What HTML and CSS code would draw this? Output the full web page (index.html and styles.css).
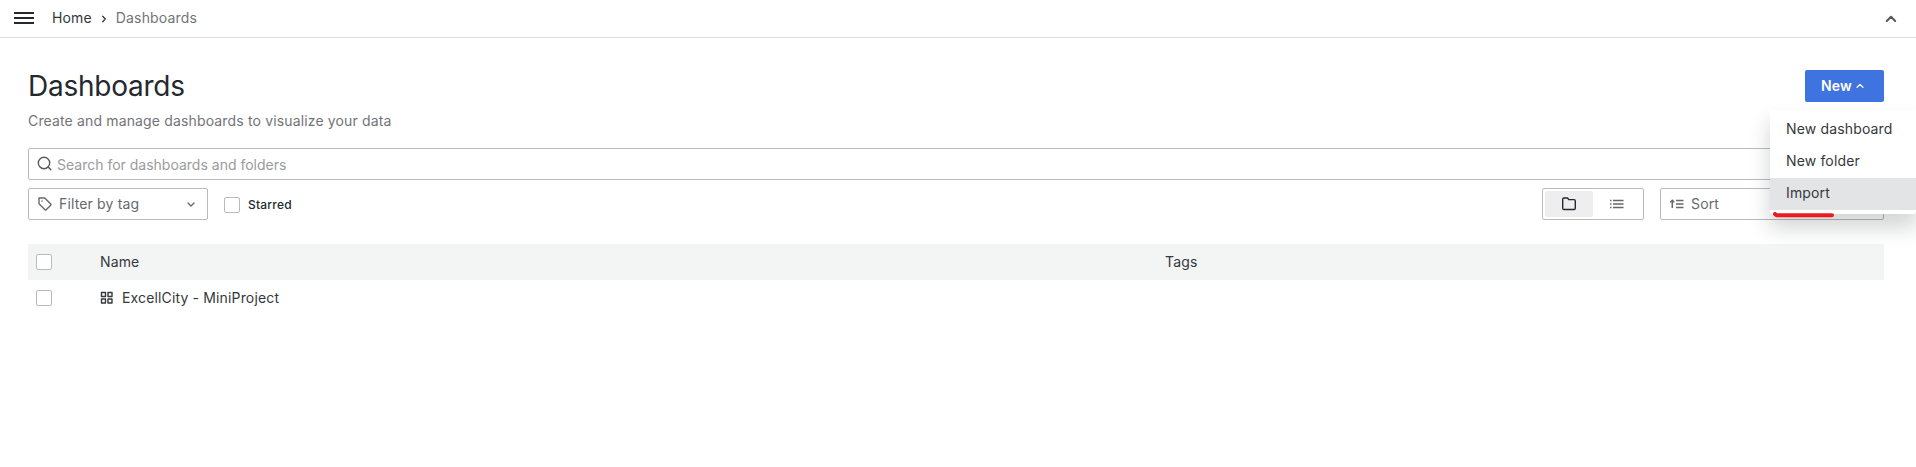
FILE: index.html
```html
<!DOCTYPE html>
<html lang="en">
<head>
<meta charset="utf-8">
<title>Dashboards</title>
<link rel="stylesheet" href="styles.css">
</head>
<body>
<header class="topbar">
  <svg class="burger" width="20" height="12" viewBox="0 0 20 12"><path d="M0 1h20M0 6h20M0 11h20"/></svg>
  <nav class="crumbs">
    <a class="home">Home</a>
    <svg class="line" width="16" height="16" viewBox="0 0 16 16"><path d="M6.700 5.300 9.300 8l-2.600 2.700"/></svg>
    <span class="current">Dashboards</span>
  </nav>
  <svg class="collapse line" width="18" height="18" viewBox="0 0 18 18"><path d="m4.800 11 4.200-4.200 4.200 4.200"/></svg>
</header>
<main class="page">
  <div class="heading">
    <h1>Dashboards</h1>
    <div class="new-wrap">
      <button class="new">New<svg class="line" width="14" height="14" viewBox="0 0 14 14"><path d="m4.100 8.200 2.900-2.800 2.900 2.800"/></svg></button>
      <div class="menu">
        <div class="item">New dashboard</div>
        <div class="item">New folder</div>
        <div class="item active">Import</div>
        <svg class="mark" width="62" height="6" viewBox="0 0 62 6"><path d="M3 2 4.500 3.300h55.500"/></svg>
      </div>
    </div>
  </div>
  <p class="subtitle">Create and manage dashboards to visualize your data</p>
  <div class="field search">
    <svg class="line" width="16" height="16" viewBox="0 0 16 16"><circle cx="7" cy="7" r="5.700"/><path d="m11.100 11.100 2.700 2.700"/></svg>
    <span>Search for dashboards and folders</span>
  </div>
  <div class="filters">
    <div class="field tag">
      <svg class="line" width="16" height="16" viewBox="0 0 16 16"><path d="M2 2h5.700l6 6q.6.6 0 1.200L9.200 13.700q-.6.6-1.200 0L2 7.700Z"/><path d="M5 5h.1"/></svg>
      <span>Filter by tag</span>
      <svg class="line arrow" width="16" height="16" viewBox="0 0 16 16"><path d="m5 7 3 2.900L11 7"/></svg>
    </div>
    <label class="starred"><span class="box"></span><span class="starred-text">Starred</span></label>
    <div class="views">
      <div class="view selected"><svg class="line" width="16" height="16" viewBox="0 0 16 16"><path d="M3 2h3.300q.7 0 .9.700l.3.900h5.500q1.300 0 1.300 1.300v7.300q0 1.300-1.300 1.300H3q-1.300 0-1.300-1.300V3.300Q1.700 2 3 2Z"/></svg></div>
      <div class="view"><svg class="list" width="16" height="16" viewBox="0 0 16 16"><path d="M1 4.500h1.500M4 4.500h10.500M1 8h1.500M4 8h10.500M1 11.500h1.500M4 11.500h10.500"/></svg></div>
    </div>
    <div class="field sort">
      <svg class="list" width="16" height="16" viewBox="0 0 16 16"><path d="M7 4.500h7.500M7 8h7.500M7 11.500h7.500M3.300 12V4.500M1.300 6.200l2-2 2 2"/></svg>
      <span>Sort</span>
    </div>
  </div>
  <div class="table">
    <div class="row head"><span class="box"></span><span class="name">Name</span><span>Tags</span></div>
    <div class="row"><span class="box"></span><span class="name"><svg class="line" width="14" height="14" viewBox="0 0 14 14"><path d="M1.500 1.500h4v4h-4zM8 1.500h4v4H8zM1.500 8h4v4h-4zM8 8h4v4H8z"/></svg>ExcellCity - MiniProject</span><span></span></div>
  </div>
</main>
</body>
</html>
```
FILE: styles.css
```css
* { box-sizing: border-box; }
body {
  margin: 0;
  height: 467px;
  overflow: hidden;
  background: #fff;
  color: #34383c;
  font: 14px/22px Inter, sans-serif;
  letter-spacing: 0.15px;
}
svg { flex: none; display: block; }
.line, .list, .burger, .mark path { fill: none; stroke: currentColor; }
.line { stroke-width: 1.4; stroke-linecap: round; stroke-linejoin: round; }
.list { stroke-width: 1.5; }
.burger { stroke-width: 2; color: #24292e; }

.topbar {
  display: flex;
  align-items: center;
  height: 38px;
  padding: 0 16px 1px 14px;
  border-bottom: 1px solid #dfe0e1;
}
.crumbs { display: flex; align-items: center; gap: 4px; margin-left: 18px; }
.crumbs .line { margin: 1px 0 0; stroke-width: 1.3; }
.current { color: #717478; }
.collapse { margin: 1px 0 0 auto; color: #55595d; stroke-width: 2; }

.page { padding: 32px 32px 0 28px; }
.heading { display: flex; justify-content: space-between; align-items: center; height: 32px; }
h1 { margin: 0; color: #24292e; font-size: 28px; line-height: 32px; font-weight: 400; letter-spacing: -0.25px; }
.new-wrap { position: relative; }
.new {
  display: flex;
  align-items: center;
  width: 79px;
  height: 32px;
  padding: 0 16px;
  border: 0;
  border-radius: 2px;
  background: #3f73df;
  color: #fff;
  font: 600 14px/30px Inter, sans-serif;
  letter-spacing: 0.15px;
}
.new .line { margin-left: 1px; stroke-width: 1.3; }
.menu {
  position: absolute;
  z-index: 1;
  top: 40px;
  left: -35px;
  width: 146px;
  padding: 4px 0;
  border-radius: 2px;
  background: #fff;
  box-shadow: 0 13px 20px 1px rgba(24, 26, 27, 0.18);
}
.item { height: 32px; padding: 4px 16px; line-height: 21px; white-space: nowrap; }
.active { background: #e3e4e6; }
.mark { position: absolute; left: 2px; top: 102px; }
.mark path { stroke: #eb1c1f; stroke-width: 4; stroke-linecap: round; stroke-linejoin: round; }

.subtitle { margin: 8px 0 16px; color: #717478; height: 22px; letter-spacing: 0.15px; }
.field {
  display: flex;
  align-items: center;
  height: 32px;
  border: 1px solid #b9babb;
  border-radius: 2px;
  color: #66696d;
}
.search { padding: 0 8px; gap: 4px; height: 32px; }
.search span { color: #999b9d; padding-top: 2px; letter-spacing: 0; }
.search .line { color: #55585c; }
.filters { display: flex; align-items: center; margin-top: 8px; }
.tag { width: 180px; padding: 0 8px; gap: 6px; }
.arrow { margin-left: auto; }
.starred { display: flex; align-items: center; gap: 8px; margin: 1px 0 0 16px; color: #24292e; font-size: 12px; font-weight: 450; letter-spacing: 0.2px; }
.box { display: block; flex: none; width: 16px; height: 16px; border: 1px solid #b9babb; border-radius: 2px; background: #fff; }
.views { display: flex; width: 102px; height: 32px; padding: 2px; margin-left: auto; border: 1px solid #b9babb; border-radius: 2px; }
.view { display: flex; flex: 1; align-items: center; justify-content: center; color: #66696d; }
.selected { background: #eee; color: #24292e; border-radius: 2px; }
.sort { width: 224px; margin-left: 16px; padding: 0 8px; gap: 6px; }

.table { margin-top: 24px; }
.row { display: grid; grid-template-columns: 64px 1065px 1fr; align-items: center; height: 36px; padding-left: 8px; }
.head { background: #f3f5f5; }
.name { display: flex; align-items: center; gap: 8px; }
```
